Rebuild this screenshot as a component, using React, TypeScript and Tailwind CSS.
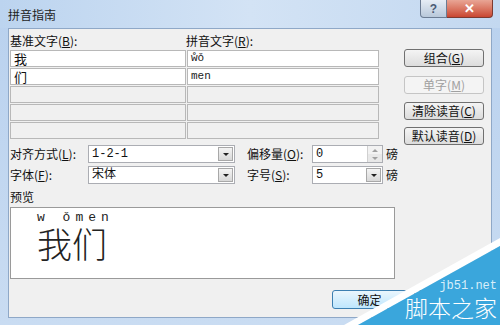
import React from "react";

const cjk = "font-['Microsoft_YaHei','Noto_Sans_CJK_SC',sans-serif]";

function Btn({ label, k, disabled }: { label: string; k: string; disabled?: boolean }) {
  return (
    <div
      className={`h-[18px] w-[80px] flex items-center justify-center rounded-[3px] border text-[12px] leading-none ${
        disabled
          ? "border-[#c5c5c5] bg-[#f4f4f4] text-[#a0a0a0]"
          : "border-[#707070] bg-gradient-to-b from-[#f4f4f4] to-[#dcdcdc] text-[#111]"
      }`}
    >
      {label}(<span className="underline">{k}</span>)
    </div>
  );
}

function Combo({ value, width, spin }: { value: string; width: string; spin?: boolean }) {
  return (
    <div className={`${width} h-[18px] flex border border-[#abadb3] bg-white`}>
      <div className="flex-1 pl-[3px] text-[12px] leading-[16px] text-[#111] font-['Liberation_Mono','Noto_Sans_CJK_SC',monospace]">
        {value}
      </div>
      {spin ? (
        <div className="w-[15px] flex flex-col border-l border-[#d0d0d0]">
          <div className="flex-1 flex items-center justify-center bg-[#f2f2f2]">
            <div className="w-0 h-0 border-l-[3px] border-r-[3px] border-b-[3px] border-l-transparent border-r-transparent border-b-[#a0a0a0]" />
          </div>
          <div className="flex-1 flex items-center justify-center bg-[#e8e8e8]">
            <div className="w-0 h-0 border-l-[3px] border-r-[3px] border-t-[3px] border-l-transparent border-r-transparent border-t-[#a0a0a0]" />
          </div>
        </div>
      ) : (
        <div className="w-[15px] m-[1px] flex items-center justify-center border border-[#a8a8a8] bg-gradient-to-b from-[#f4f4f4] to-[#d8d8d8]">
          <div className="w-0 h-0 border-l-[3px] border-r-[3px] border-t-[3px] border-l-transparent border-r-transparent border-t-[#222]" />
        </div>
      )}
    </div>
  );
}

function Cell({ text, filled, mono }: { text?: string; filled?: boolean; mono?: boolean }) {
  return (
    <div
      className={`h-[17px] border border-[#b8b8b8] pl-[3px] leading-[15px] ${
        filled ? "bg-white" : "bg-[#f0f0f0]"
      } ${mono ? "text-[11px] font-['Liberation_Mono',monospace] text-[#222]" : "text-[13px] text-[#111]"}`}
    >
      {text}
    </div>
  );
}

function Label({ text, k, w }: { text: string; k: string; w: string }) {
  return (
    <div className={`${w} whitespace-nowrap`}>
      {text}(<span className="underline">{k}</span>):
    </div>
  );
}

export default function App() {
  return (
    <div className={`relative w-[500px] h-[325px] overflow-hidden flex flex-col bg-gradient-to-b from-[#b9d1ee] to-[#c9dcf2] ${cjk}`}>
      {/* title bar */}
      <div className="h-[28px] flex items-start bg-gradient-to-r from-[#bcd4ef] via-[#d3e3f5] to-[#c3d8f0]">
        <div className="pl-[8px] pt-[6px] text-[12px] text-[#1e1e1e]">拼音指南</div>
        <div className="ml-auto mr-[7px] flex">
          <div className="w-[27px] h-[18px] flex items-center justify-center rounded-bl-[4px] border border-t-0 border-[#6b7c93] bg-gradient-to-b from-[#e6edf5] to-[#b8c8da] text-[12px] font-bold text-[#4a5b74] font-['Liberation_Sans',sans-serif]">
            ?
          </div>
          <div className="w-[46px] h-[18px] flex items-center justify-center rounded-br-[4px] border border-t-0 border-l-0 border-[#7d3a31] bg-gradient-to-b from-[#e8a595] to-[#c94530] text-[13px] font-bold text-white font-['Liberation_Sans',sans-serif]">
            ✕
          </div>
        </div>
      </div>

      {/* client */}
      <div className="flex-1 mx-[8px] mb-[7px] bg-[#f0f0f0] border border-[#8fa8c7] flex flex-col pl-[1px] pt-[3px] text-[12px] text-[#111]">
        <div className="flex h-[107px] items-start">
          <div className="w-[369px]">
            <div className="flex h-[17px] leading-[17px]">
              <Label text="基准文字" k="B" w="w-[176px]" />
              <Label text="拼音文字" k="R" w="w-[120px]" />
            </div>
            <div className="grid grid-cols-[176px_192px] gap-x-[1px] gap-y-[1px] mt-[1px]">
              <Cell text="我" filled />
              <Cell text="ẘǒ" filled mono />
              <Cell text="们" filled />
              <Cell text="men" filled mono />
              <Cell />
              <Cell />
              <Cell />
              <Cell />
              <Cell />
              <Cell />
            </div>
          </div>
          <div className="ml-[25px] mt-[17px] flex flex-col gap-[9px]">
            <Btn label="组合" k="G" />
            <Btn label="单字" k="M" disabled />
            <div className="-mt-[1px]">
              <Btn label="清除读音" k="C" />
            </div>
            <div className="-mt-[2px]">
              <Btn label="默认读音" k="D" />
            </div>
          </div>
        </div>

        <div className="flex items-center h-[18px] mt-[6px]">
          <Label text="对齐方式" k="L" w="w-[78px]" />
          <Combo value="1-2-1" width="w-[147px]" />
          <div className="w-[77px] pl-[12px]">
            <Label text="偏移量" k="O" w="w-[65px]" />
          </div>
          <Combo value="0" width="w-[71px]" spin />
          <div className="pl-[3px]">磅</div>
        </div>
        <div className="flex items-center h-[18px] mt-[3px]">
          <Label text="字体" k="F" w="w-[78px]" />
          <Combo value="宋体" width="w-[147px]" />
          <div className="w-[77px] pl-[12px]">
            <Label text="字号" k="S" w="w-[65px]" />
          </div>
          <Combo value="5" width="w-[71px]" />
          <div className="pl-[3px]">磅</div>
        </div>

        <div className="mt-[5px] h-[16px] leading-[16px]">预览</div>
        <div className="w-[385px] h-[72px] mt-[2px] bg-white border border-[#9a9a9a] pl-[26px] pt-[4px]">
          <div className="text-[13px] leading-[12px] tracking-[5px] text-[#222] font-['Liberation_Mono',monospace]">
            w ǒmen
          </div>
          <div className="text-[35px] leading-[38px] font-light text-[#222]">我们</div>
        </div>

        <div className="flex mt-[11px] ml-[322px] gap-[7px]">
          <div className="w-[75px] h-[19px] flex items-center justify-center rounded-[3px] border border-[#3c7fb1] bg-gradient-to-b from-[#eaf6fd] to-[#bee6fd]">
            确定
          </div>
          <div className="w-[75px] h-[19px] flex items-center justify-center rounded-[3px] border border-[#707070] bg-gradient-to-b from-[#f4f4f4] to-[#dcdcdc]">
            取消
          </div>
        </div>
      </div>

      {/* watermark */}
      <svg className="absolute left-0 top-0" width="500" height="325" viewBox="0 0 500 325">
        <polygon points="344,325 500,238 500,246 358,325" fill="#ffffff" />
        <polygon points="358,325 500,246 500,325" fill="#3aa6dc" />
      </svg>
      <div className="absolute right-[3px] top-[280px] text-[12px] leading-[13px] text-[#d8eefa] font-['Liberation_Mono',monospace]">
        jb51.net
      </div>
      <div className="absolute right-[3px] top-[295px] text-[23px] leading-[25px] text-white font-light">
        脚本之家
      </div>
    </div>
  );
}
